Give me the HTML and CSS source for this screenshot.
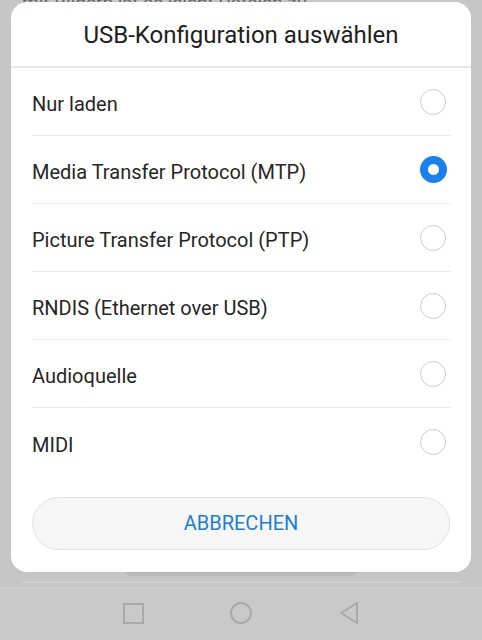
FILE: index.html
```html
<!DOCTYPE html>
<html>
<head>
  <meta charset="UTF-8">
  <title>USB-Konfiguration</title>
  <link rel="stylesheet" href="styles.css">
</head>
<body>
  <div class="screen">
    <div class="behind">
      <p class="behindText">mit Bildern ist es leicht Dateien zu</p>
      <div class="behindFill"></div>
      <div class="toast"></div>
      <div class="rule"></div>
    </div>

    <div class="navBar">
      <span class="navSquare"></span>
      <span class="navCircle"></span>
      <svg class="navBack" width="22" height="24" viewBox="0 0 22 24">
        <path d="M19 2 L3 12 L19 22 Z" fill="none" stroke="#a9a9a9" stroke-width="2" stroke-linejoin="round"/>
      </svg>
    </div>

    <div class="dialog">
      <div class="dialogTitle">USB-Konfiguration auswählen</div>
      <ul class="options">
        <li><span>Nur laden</span><i class="radio"></i></li>
        <li><span>Media Transfer Protocol (MTP)</span><i class="radio checked"></i></li>
        <li><span>Picture Transfer Protocol (PTP)</span><i class="radio"></i></li>
        <li><span>RNDIS (Ethernet over USB)</span><i class="radio"></i></li>
        <li><span>Audioquelle</span><i class="radio"></i></li>
        <li><span>MIDI</span><i class="radio"></i></li>
      </ul>
      <div class="cancel">ABBRECHEN</div>
    </div>
  </div>
</body>
</html>
```

FILE: styles.css
```css
body {
  margin: 0;
  background-color: #c6c6c6;
  font-family: Roboto, "Noto Sans", sans-serif;
}
.screen {
  position: relative;
  width: 482px;
  height: 640px;
  overflow: hidden;
  display: flex;
  flex-direction: column;
}

/* stuff under the dimmed overlay */
.behind {
  flex: 1;
  display: flex;
  flex-direction: column;
}
.behindText {
  margin: -9px 0 0 22px;
  font-size: 19px;
  color: #666;
  white-space: nowrap;
}
.behindFill {
  flex: 1;
}
.toast {
  width: 240px;
  height: 18px;
  margin: 0 auto;
  margin-bottom: 5px;
  border-radius: 0 0 12px 12px;
  background-color: #b9b9b9;
}
.rule {
  height: 2px;
  margin: 0 22px 4px;
  background-color: #cfcfcf;
}
.navBar {
  height: 50px;
  border-top: 1px solid #d0d0d0;
  background-color: #c9c9c9;
  display: flex;
  align-items: center;
  justify-content: center;
  gap: 86px;
  padding-bottom: 2px;
}
.navSquare {
  width: 17px;
  height: 17px;
  border: 2px solid #a9a9a9;
}
.navCircle {
  width: 18px;
  height: 18px;
  border: 2px solid #a9a9a9;
  border-radius: 50%;
}

/* dialog */
.dialog {
  position: absolute;
  top: 2px;
  left: 11px;
  width: 460px;
  height: 570px;
  background-color: #fff;
  border-radius: 16px;
  display: flex;
  flex-direction: column;
}
.dialogTitle {
  height: 62px;
  padding-top: 2px;
  line-height: 62px;
  text-align: center;
  font-size: 24px;
  color: #1e1e1e;
  border-bottom: 2px solid #e8e8e8;
}
.options {
  list-style: none;
  margin: 0;
  padding: 0 21px;
}
.options li {
  height: 67px;
  display: flex;
  align-items: center;
  justify-content: space-between;
  border-bottom: 1px solid #ebebeb;
  font-size: 20px;
  color: #262626;
}
.options li span {
  padding-top: 5px;
}
.options li:last-child {
  border-bottom: none;
  height: 68px;
}
.radio {
  width: 24px;
  height: 24px;
  margin-right: 4px;
  border: 1px solid #cbcbcb;
  border-radius: 50%;
}
.radio.checked {
  width: 11px;
  height: 11px;
  margin-right: 3px;
  border: 8px solid #1a80ee;
}
.cancel {
  margin: 21px 21px 0;
  height: 51px;
  line-height: 51px;
  text-align: center;
  border: 1px solid #e2e2e2;
  border-radius: 27px;
  background-color: #f6f6f6;
  color: #1b7fd8;
  font-size: 20px;
}
```
